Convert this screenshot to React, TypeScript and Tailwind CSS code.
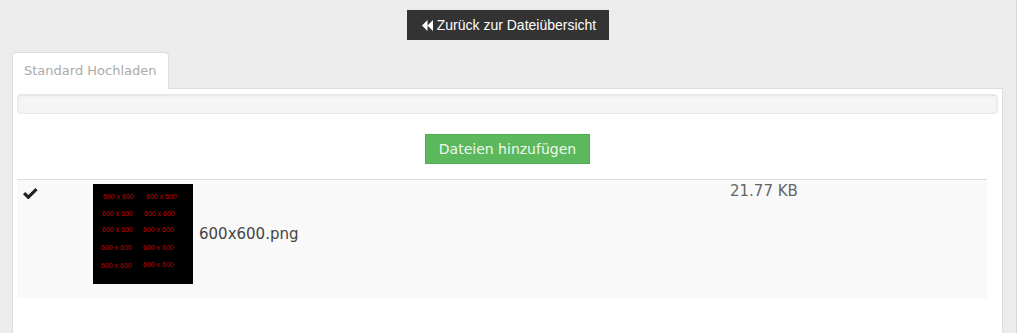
const dejavu = { fontFamily: '"DejaVu Sans", Verdana, sans-serif' };

// the little "600 x 600" labels painted on the preview image
const labels = [
  { top: 9, left: 10 },
  { top: 9, left: 53 },
  { top: 26, left: 9 },
  { top: 26, left: 51 },
  { top: 42, left: 9 },
  { top: 42, left: 50 },
  { top: 60, left: 8 },
  { top: 60, left: 50 },
  { top: 78, left: 8 },
  { top: 77, left: 50 },
];

function BackIcon() {
  return (
    <svg width="11" height="11" viewBox="0 0 11 11" className="shrink-0">
      <path d="M5.5 0v11L0 5.5z M11 0v11L5.5 5.5z" fill="#fff" />
    </svg>
  );
}

function Check() {
  return (
    <svg width="15" height="11" viewBox="0 0 15 11">
      <path d="M0 6.2 2.2 4 5.3 7.1 12.4 0 14.6 2.2 5.3 11.5z" fill="#222" />
    </svg>
  );
}

function Preview() {
  return (
    <div className="relative w-[100px] h-[100px] bg-black shrink-0">
      {labels.map((l, i) => (
        <span
          key={i}
          className="absolute text-[7px] leading-none text-[#c00000] whitespace-nowrap"
          style={{ top: l.top, left: l.left, fontFamily: '"Liberation Sans", Arial, sans-serif' }}
        >
          600 x 600
        </span>
      ))}
    </div>
  );
}

export default function App() {
  return (
    <div className="w-full min-h-screen bg-[#ececec] border-r border-[#d6d6d6] overflow-hidden">
      {/* BACK BUTTON */}
      <div className="flex justify-center pt-[10px]">
        <button
          className="h-[30px] pl-[15px] pr-[13px] flex items-center gap-[4px] bg-[#333] text-white text-[14px]"
          style={{ fontFamily: '"Liberation Sans", Arial, sans-serif' }}
        >
          <BackIcon />
          Zurück zur Dateiübersicht
        </button>
      </div>

      <div className="mt-[12px] pl-[12px] pr-[13px]">
        {/* TABS */}
        <div className="flex border-b border-[#ddd] h-[37px]">
          <div
            className="h-[37px] -mb-px pl-[11px] pr-[12px] flex items-center bg-white border border-b-0 border-[#ddd] rounded-t-[4px] text-[13px] text-[#aaa]"
            style={dejavu}
          >
            Standard Hochladen
          </div>
        </div>

        {/* PANEL */}
        <div className="bg-white border-x border-[#ddd] px-[4px] pt-[5px] h-[260px]">
          <div className="h-[20px] rounded-[4px] bg-[#f5f5f5] border border-[#e8e8e8] shadow-[inset_0_1px_2px_rgba(0,0,0,0.08)]" />

          <div className="flex justify-center mt-[20px]">
            <button
              className="h-[30px] px-[13px] bg-[#5cb85c] border border-[#4cae4c] text-[#eef7ee] text-[14px]"
              style={dejavu}
            >
              Dateien hinzufügen
            </button>
          </div>

          {/* FILE ROW */}
          <div className="mt-[15px] w-[970px] h-[119px] border-t border-[#ddd] bg-[#f9f9f9] flex" style={dejavu}>
            <div className="w-[713px] flex">
              <div className="w-[76px] pl-[6px] pt-[8px]">
                <Check />
              </div>
              <div className="flex items-center self-start pt-[4px] gap-[6px]">
                <Preview />
                <span className="text-[15px] leading-[21px] text-[#444]">600x600.png</span>
              </div>
            </div>
            <div className="pt-[1px] text-[15px] leading-[21px] text-[#666]">21.77 KB</div>
          </div>
        </div>
      </div>
    </div>
  );
}
